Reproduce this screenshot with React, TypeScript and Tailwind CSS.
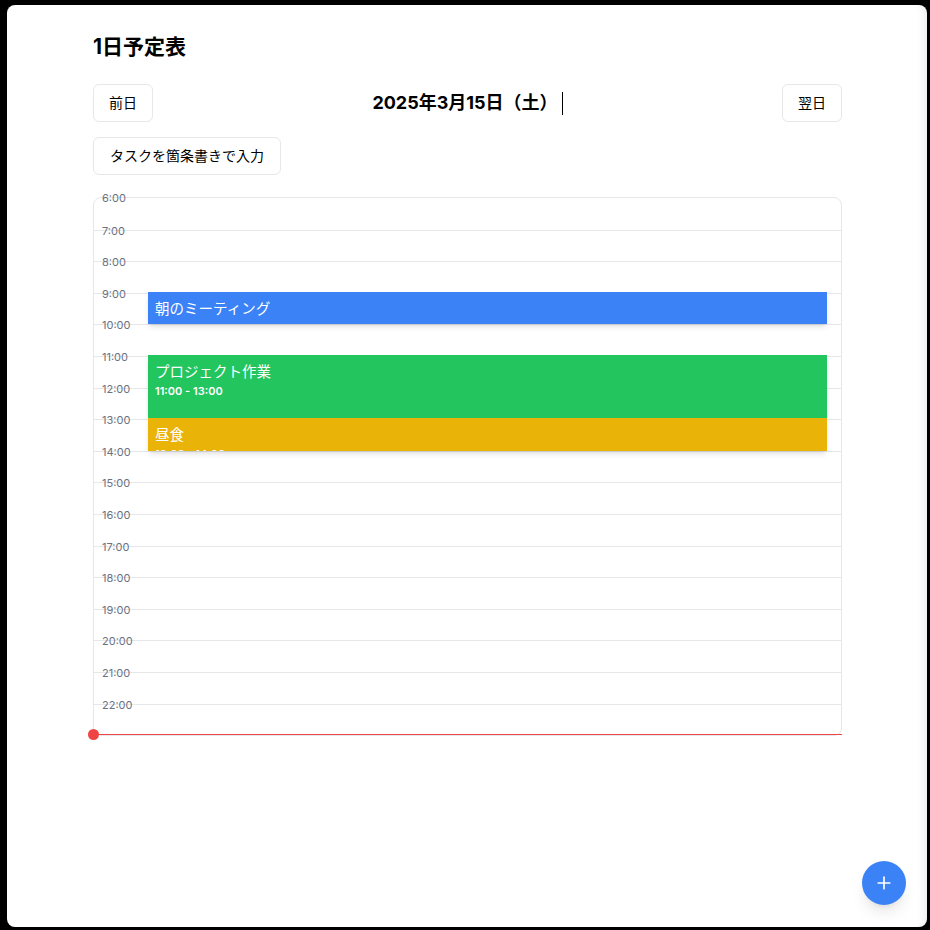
import React from 'react';
import { Plus } from 'lucide-react';

const HOUR_PX = 31.6;
const START_HOUR = 6;
const hours = Array.from({ length: 17 }, (_, i) => START_HOUR + i);

interface ScheduleEvent {
  title: string;
  start: number;
  end: number;
  color: string;
}

const events: ScheduleEvent[] = [
  { title: '朝のミーティング', start: 9, end: 10, color: 'bg-[#3b82f6]' },
  { title: 'プロジェクト作業', start: 11, end: 13, color: 'bg-[#22c55e]' },
  { title: '昼食', start: 13, end: 14, color: 'bg-[#eab308]' },
];

const fmt = (h: number) => `${String(h).padStart(2, '0')}:00`;

function NavButton({ children, wide }: { children: React.ReactNode; wide?: boolean }) {
  return (
    <button
      className={`${wide ? 'px-4' : 'px-[15px]'} py-2 text-sm leading-5 border border-gray-200 rounded-md bg-white text-black`}
    >
      {children}
    </button>
  );
}

export default function App() {
  return (
    <div className="min-h-screen bg-black pt-[5px] pl-[7px] pr-[3px] pb-[3px] font-['Inter','Noto_Sans_CJK_JP',sans-serif]">
      <div className="h-[922px] bg-white rounded-lg shadow-[inset_-10px_0_10px_-8px_rgba(0,0,0,0.08)]">
        <div className="w-[749px] ml-[86px] pt-[28px] flex flex-col">
          <h1 className="text-[21px] leading-7 font-bold text-black mb-[23px]">1日予定表</h1>

          {/* Day navigation */}
          <div className="flex items-center justify-between mb-[15px]">
            <NavButton>前日</NavButton>
            <div className="flex items-center">
              <span className="text-lg leading-7 font-bold text-black">2025年3月15日（土）</span>
              <span className="ml-[4px] w-px h-[23px] bg-black" />
            </div>
            <NavButton>翌日</NavButton>
          </div>

          <div className="flex mb-[22px]">
            <NavButton wide>タスクを箇条書きで入力</NavButton>
          </div>

          {/* Timeline */}
          <div className="relative h-[539px] flex flex-col border border-gray-200 rounded-lg">
            {hours.map((h) => (
              <div key={h} className="shrink-0 h-[31.6px] border-t border-gray-200 first:border-t-0">
                <span className="block -mt-[8px] pl-[8px] text-[11px] leading-4 text-gray-500">{h}:00</span>
              </div>
            ))}

            {events.map((ev) => (
              <div
                key={ev.title}
                className={`absolute left-[54px] right-[14px] overflow-hidden shadow-md px-[7px] pt-[6px] text-white ${ev.color}`}
                style={{
                  top: (ev.start - START_HOUR) * HOUR_PX - 1,
                  height: (ev.end - ev.start) * HOUR_PX + 1,
                }}
              >
                <div className="text-[14.5px] leading-[22px]">{ev.title}</div>
                <div className="text-[11px] leading-4 font-semibold">
                  {fmt(ev.start)} - {fmt(ev.end)}
                </div>
              </div>
            ))}

            {/* Current time indicator */}
            <div className="absolute z-10 -left-px -right-px top-[536px] h-px bg-[#ef4444]">
              <span className="absolute -left-[5px] -top-[5px] w-[11px] h-[11px] rounded-full bg-[#ef4444]" />
            </div>
          </div>
        </div>
      </div>

      <button className="fixed bottom-[25px] right-[24px] w-11 h-11 rounded-full bg-[#3b82f6] text-white flex items-center justify-center shadow-lg">
        <Plus className="w-5 h-5" strokeWidth={2} />
      </button>
    </div>
  );
}
